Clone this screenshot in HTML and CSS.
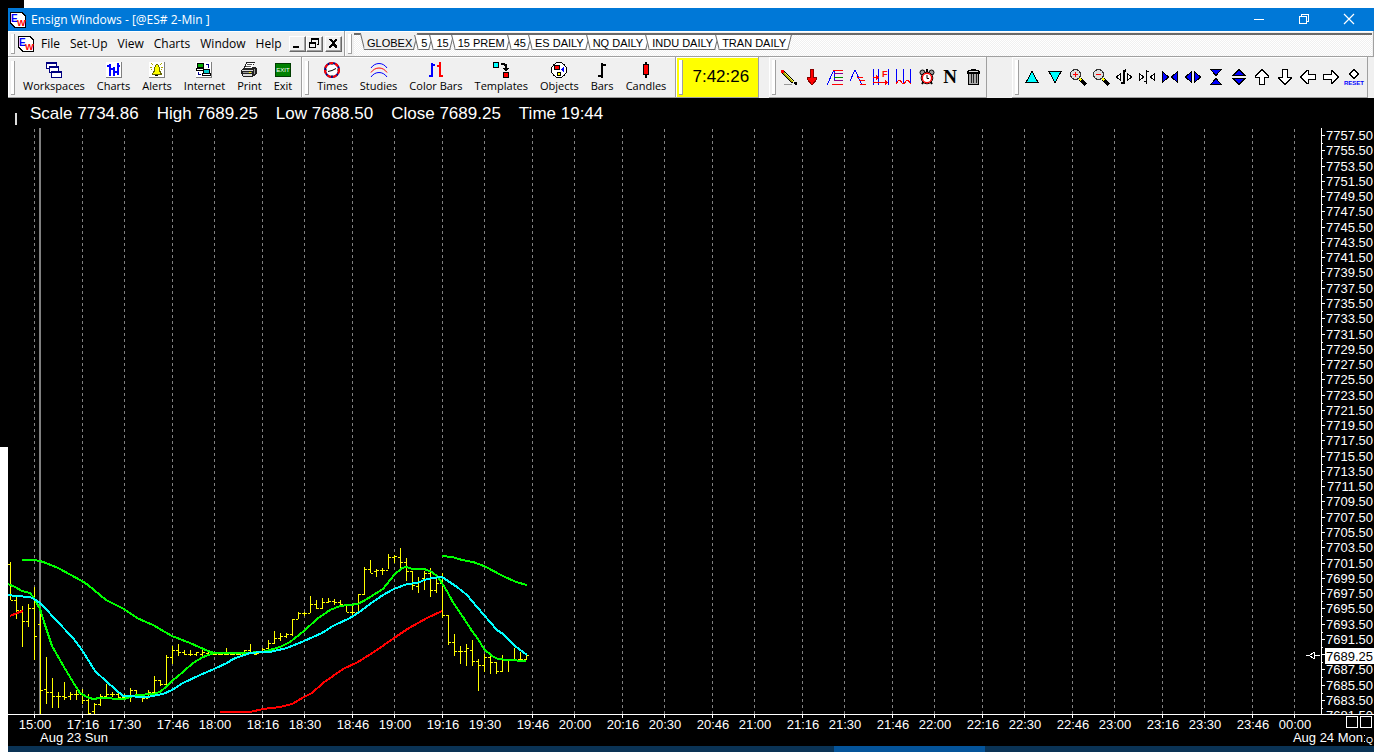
FILE: index.html
```html
<!DOCTYPE html>
<html lang="en">
<head>
    <meta charset="UTF-8" />
    <meta name="viewport" content="width=device-width, initial-scale=1" />
    <title>Ensign Windows - [@ES# 2-Min ]</title>
    <link rel="stylesheet" href="styles.css">
</head>
<body>

    <div class="window">
        <header class="titlebar">
            <svg class="icon" viewBox="0 0 16 16"><path d="M0 0h12l4 4v12H4l-4-4z" fill="#000" /><path d="M1 1h10l4 4v10H5l-4-4z" fill="#fff" /><text x="1" y="10" font-size="10" font-weight="bold" fill="#00f">E</text><text x="7" y="14" font-size="9" font-weight="bold" fill="#f00">W</text></svg>
            <h1>Ensign Windows - [@ES# 2-Min ]</h1>
            <button class="caption" aria-label="Minimize"><svg class="icon" viewBox="0 0 16 16"><path d="M3 8.500h10" stroke="#fff" /></svg></button>
            <button class="caption" aria-label="Restore"><svg class="icon" viewBox="0 0 16 16"><path d="M3.500 5.500h7v7h-7zM5.500 5V3.500h7v7H11" stroke="#fff" fill="none" /></svg></button>
            <button class="caption" aria-label="Close"><svg class="icon smooth" viewBox="0 0 16 16"><path d="M3 3l10 10M13 3L3 13" stroke="#fff" stroke-width="1.200" /></svg></button>
        </header>

        <div class="row">
            <nav class="band menu">
                <svg class="icon" viewBox="0 0 16 16"><path d="M0 0h12l4 4v12H4l-4-4z" fill="#000" /><path d="M1 1h10l4 4v10H5l-4-4z" fill="#fff" /><text x="1" y="10" font-size="10" font-weight="bold" fill="#00f">E</text><text x="7" y="14" font-size="9" font-weight="bold" fill="#f00">W</text></svg>
                <button>File</button>
                <button>Set-Up</button>
                <button>View</button>
                <button>Charts</button>
                <button>Window</button>
                <button>Help</button>
                <div class="mdi">
                    <button aria-label="Minimize chart"><svg viewBox="0 0 14 13"><path d="M3 9h6v2H3z" /></svg></button>
                    <button aria-label="Restore chart"><svg viewBox="0 0 14 13"><path d="M4 1h8v7h-2v-1h1V3H5v2H4zM2 5h7v6H2zM3 7v3h5V7z" fill-rule="evenodd" /></svg></button>
                    <button aria-label="Close chart"><svg viewBox="0 0 14 13"><path d="M3 2h2l2 2 2-2h2v1L8 6l3 3v2H9L7 8l-2 3H3V9l3-3-3-3z" /></svg></button>
                </div>
            </nav>
            <nav class="band tabs-band">
                <div class="tabs">
                    <button class="tab active">GLOBEX</button>
                    <button class="tab">5</button>
                    <button class="tab">15</button>
                    <button class="tab">15 PREM</button>
                    <button class="tab">45</button>
                    <button class="tab">ES DAILY</button>
                    <button class="tab">NQ DAILY</button>
                    <button class="tab">INDU DAILY</button>
                    <button class="tab">TRAN DAILY</button>
                </div>
            </nav>
        </div>

        <div class="row toolbars">
            <div class="band tools">
                <button><svg class="icon" viewBox="0 0 16 16"><path d="M0 0h11v7H0zM3 4h10v7H3zM5 9h11v7H5z" fill="#000080" /><path d="M1 2h9v2H1zM1 4h2v2H1zM4 6h8v3H4zM4 9h1v1H4zM6 11h9v4H6z" fill="#fff" /></svg>Workspaces</button>
                <button><svg class="icon" viewBox="0 0 16 16"><path d="M0 0h16v16H0z" fill="#808080" /><path d="M0 0h15v15H0z" fill="#fff" /><path d="M3 2h2v12H3zM1 3h2v2H1zM5 6h2v2H5zM7 5h2v9H7zM9 9h2v2H9zM11 1h2v12h-2zM13 3h1v2h-1z" fill="#00f" /></svg>Charts</button>
                <button><svg class="icon" viewBox="0 0 16 16"><path d="M0 0h16v16H0z" fill="#808080" /><path d="M0 0h15v15H0z" fill="#fff" /><path d="M7 2h2v1h1v2h1v4h1v2h1v2H3v-2h1V9h1V5h1V3h1z" fill="#660" /><path d="M7 3h2v2h1v5h1v2H4v-1h1v-1h1V5h1z" fill="#ff0" /><path d="M6 13h3v1H6z" /><path d="M2 1l2 2M1 5h2M13 1l-2 2M14 5h-2M2 8l1-1M13 8l-1-1" stroke="#aa0" /></svg>Alerts</button>
                <button><svg class="icon" viewBox="0 0 16 16"><path d="M0 0h16v16H0z" fill="#808080" /><path d="M0 0h15v15H0z" fill="#fff" /><path d="M1 1h7v5H1zM0 6h8v3H0zM7 7h7v5H7zM6 11h9v3H6z" /><path d="M2 2h5v3H2z" fill="#0a0" /><path d="M8 8h5v3H8z" fill="#0cc" /><path d="M1 7h6v1H1zM7 12h7v1H7z" fill="#fff" /><path d="M10 2.500h2.500V6M2.500 10v2.500H5" fill="none" stroke="#008" /></svg>Internet</button>
                <button><svg class="icon" viewBox="0 0 16 16"><path d="M5 0h9v1h-1v2h-1v2h3v1h1v6h-1v1h-1v1h-2v1H2v-1H1v-2H0V8h1V7h1V6h1V4h1V2h1z" fill="#222" /><path d="M6 1h7l-2 5H4z" fill="#fff" /><path d="M6 2h5v1H6zM5 4h5v1H5z" fill="#555" /><path d="M1 8h11v1H1zM2 12h9v2H2z" fill="#ddd" /><path d="M2 10h9v1H2zM13 7h1v5h-1z" fill="#999" /><path d="M8 10h2v1H8z" fill="#ff0" /></svg>Print</button>
                <button><svg class="icon" viewBox="0 0 16 16"><path d="M0 1h16v14H0z" fill="#003c00" /><path d="M1 2h14v12H1z" fill="#008000" /><text x="8" y="10" font-size="6" text-anchor="middle" fill="#fff">EXIT</text></svg>Exit</button>
            </div>
            <div class="band tools">
                <button><svg class="icon smooth" viewBox="0 0 16 16"><circle cx="8" cy="8" r="7" fill="#fff" stroke="#000080" stroke-width="2" /><circle cx="8" cy="8" r="7" fill="none" stroke="#f00" stroke-width="2" stroke-dasharray="4 2" /><path d="M4 9.500l4-1 4-2M8 2v1M8 13v1M2 8h1M13 8h1" stroke="#000" fill="none" /></svg>Times</button>
                <button><svg class="icon smooth" viewBox="0 0 16 16"><path d="M0 6C4 0 12 0 16 6M0 15C4 9 12 9 16 15" fill="none" stroke="#00f" /><path d="M0 10.500C4 4.500 12 4.500 16 10.500" fill="none" stroke="#f00" /></svg>Studies</button>
                <button><svg class="icon" viewBox="0 0 16 16"><path d="M3 1h2v14H3zM1 13h2v2H1zM5 2h2v2H5z" fill="#00f" /><path d="M11 0h2v15h-2zM9 3h2v2H9zM13 13h2v2h-2z" fill="#f00" /></svg>Color Bars</button>
                <button><svg class="icon" viewBox="0 0 16 16"><path d="M0 0h6v6H0zM10 10h6v6h-6zM8 1h4v1h2v4h2v1h-1v1h-1v1h-2V8h-1V7h-1V6h2V4h-1V3H8z" /><path d="M1 1h4v4H1z" fill="#0ff" /><path d="M11 11h4v4h-4z" fill="#f00" /></svg>Templates</button>
                <button><svg class="icon" viewBox="0 0 16 16"><circle cx="8" cy="8" r="7.500" fill="#fff" stroke="#000" /><path d="M3 3h6v5H3zM6 10h4v4H6z" /><path d="M4 4h4v3H4z" fill="#f00" /><path d="M10 8l3-4v7z" fill="#00f" /><path d="M7 11h2v2H7z" fill="#ff0" /></svg>Objects</button>
                <button><svg class="icon" viewBox="0 0 16 16"><path d="M7 1h2v15H7zM4 13h3v2H4zM9 2h3v2H9z" /></svg>Bars</button>
                <button><svg class="icon" viewBox="0 0 16 16"><path d="M7 0h2v16H7zM5 2h6v11H5z" /><path d="M6 3h4v9H6z" fill="#f00" /></svg>Candles</button>
            </div>
            <div class="band clock"><time>7:42:26</time></div>
            <div class="band draw">
                <button aria-label="Pencil"><svg class="icon" viewBox="0 0 16 16"><path d="M1.500 2.500l11 11" stroke="#000" stroke-width="4" /><path d="M3 4l9 9" stroke="#aa0" stroke-width="1.500" /><path d="M4 4l9 9" stroke="#ff6" stroke-width="1" /><path d="M0 1h3v3H0z" fill="#f00" /><path d="M13 13h3v3h-2z" /><path d="M3 15h8v1H3z" fill="#999" /></svg></button>
                <button aria-label="Arrow"><svg class="icon" viewBox="0 0 16 16"><path d="M6.500.5h3v8h3v2l-4 5h-1l-4-5v-2h3z" fill="#f00" stroke="#800" /></svg></button>
                <button aria-label="Retracement"><svg class="icon" viewBox="0 0 16 16"><path d="M0 16L7 1v11" fill="none" stroke="#00f" /><path d="M6 1.500h10M5 15.500h11" stroke="#f00" /><path d="M7 4.500h9M7 11.500h9" stroke="#808" /><path d="M7 8.500h9" stroke="#080" /></svg></button>
                <button aria-label="Extension"><svg class="icon" viewBox="0 0 16 16"><path d="M0 12L5 1l7 15" fill="none" stroke="#00f" /><path d="M7 8.500h6M9 11.500h6M10 15.500h6" stroke="#f00" /></svg></button>
                <button aria-label="Fibonacci time"><svg class="icon" viewBox="0 0 16 16"><path d="M.5 0v16M5.500 0v16M15.500 0v16" stroke="#00f" /><path d="M0 8.500h5M0 13.500h15" stroke="#f00" /><path d="M3 6l3 2.500L3 11zM12 11l3 2.500-3 2.500z" fill="#f00" /><text x="9" y="8" font-size="9" font-weight="bold" fill="#f00">F</text></svg></button>
                <button aria-label="Cycles"><svg class="icon" viewBox="0 0 16 16"><path d="M.5 0v15M7.500 0v15M14.500 0v15" stroke="#00f" /><path d="M0 15l2-3 2-1 2 3 2 1 2-3 2-1 2 3 1 1" fill="none" stroke="#f00" /></svg></button>
                <button aria-label="Alarm"><svg class="icon smooth" viewBox="0 0 16 16"><path d="M3 15l2-3M13 15l-2-3M8 0v3" stroke="#000" stroke-width="2" /><circle cx="3.500" cy="3.500" r="2.500" fill="#999" stroke="#000" /><circle cx="12.500" cy="3.500" r="2.500" fill="#999" stroke="#000" /><circle cx="8" cy="9" r="5.800" fill="#fff" stroke="#000" /><circle cx="8" cy="9" r="4.700" fill="none" stroke="#f00" stroke-width="1.500" /><path d="M8 6v3.500h2" stroke="#000" fill="none" /></svg></button>
                <button aria-label="Note"><svg class="icon" viewBox="0 0 16 16"><text class="serif" x="8" y="14" font-size="19" text-anchor="middle">N</text></svg></button>
                <button aria-label="Delete"><svg class="icon" viewBox="0 0 16 16"><path d="M6 0h5v1h3v1h1v3h-1v11H3V5H2V2h1V1h3z" /><path d="M4 2h9v1H4z" fill="#ddd" /><path d="M4 5h9v10H4z" fill="#aaa" /><path d="M6 5h1v9H6zM8 5h1v9H8zM11 5h1v9h-1z" fill="#222" /></svg></button>
            </div>
            <div class="band draw view">
                <button aria-label="Up"><svg class="icon" viewBox="0 0 16 16"><path d="M8 2l6 11.500H2z" fill="#0ff" stroke="#000" /></svg></button>
                <button aria-label="Down"><svg class="icon" viewBox="0 0 16 16"><path d="M2 2.500h12L8 14z" fill="#0ff" stroke="#000" /></svg></button>
                <button aria-label="Zoom in"><svg class="icon" viewBox="0 0 16 16"><path d="M10 10l6 6" stroke="#000" stroke-width="3" /><path d="M9.500 9.500l2 2" stroke="#ff0" stroke-width="2" /><circle cx="5.500" cy="5.500" r="5" fill="#ddd" stroke="#333" /><path d="M3 5h5v1H3zM5 3h1v5H5z" fill="#f00" /></svg></button>
                <button aria-label="Zoom out"><svg class="icon" viewBox="0 0 16 16"><path d="M10 10l6 6" stroke="#000" stroke-width="3" /><path d="M9.500 9.500l2 2" stroke="#ff0" stroke-width="2" /><circle cx="5.500" cy="5.500" r="5" fill="#ddd" stroke="#333" /><path d="M3 5h5v1H3z" fill="#f00" /></svg></button>
                <button aria-label="Wider bars"><svg class="icon" viewBox="0 0 16 16"><path d="M7 1h2v14H7zM5 13h2v2H5zM9 0h1v3H9z" /><path d="M4.500 4.500v7l-4-3.500zM11.500 4.500v7l4-3.500z" fill="#fff" stroke="#000" /></svg></button>
                <button aria-label="Narrower bars"><svg class="icon" viewBox="0 0 16 16"><path d="M7 1h1v14H7zM5 12h2v1H5zM8 2h2v1H8z" /><path d="M.5 4.500v7l4-3.500zM15.500 4.500v7l-4-3.500z" fill="#fff" stroke="#000" /></svg></button>
                <button aria-label="Compress"><svg class="icon" viewBox="0 0 16 16"><path d="M.5 2.500v11L6.500 8zM15.500 2.500v11L9.500 8z" fill="#00f" stroke="#000" /></svg></button>
                <button aria-label="Expand"><svg class="icon" viewBox="0 0 16 16"><path d="M6.500 2.500v11L.5 8zM9.500 2.500v11l6-5.500z" fill="#00f" stroke="#000" /></svg></button>
                <button aria-label="Compress scale"><svg class="icon" viewBox="0 0 16 16"><path d="M2.500.5h11L8 6.500zM2.500 15.500h11L8 9.500z" fill="#00f" stroke="#000" /></svg></button>
                <button aria-label="Expand scale"><svg class="icon" viewBox="0 0 16 16"><path d="M2 6.500h12L8 .5zM2 9.500h12l-6 6z" fill="#00f" stroke="#000" /></svg></button>
                <button aria-label="Scroll up"><svg class="icon" viewBox="0 0 16 16"><path d="M8 .5l6.500 6.500v1h-4v7.500h-5V8h-4V7z" fill="#fff" stroke="#000" /></svg></button>
                <button aria-label="Scroll down"><svg class="icon" viewBox="0 0 16 16"><path d="M8 15.500l6.500-6.500V8h-4V.5h-5V8h-4v1z" fill="#fff" stroke="#000" /></svg></button>
                <button aria-label="Scroll left"><svg class="icon" viewBox="0 0 16 16"><path d="M.5 8l6.500-6.500h1v4h7.500v5H8v4H7z" fill="#fff" stroke="#000" /></svg></button>
                <button aria-label="Scroll right"><svg class="icon" viewBox="0 0 16 16"><path d="M15.500 8l-6.500-6.500H8v4H.5v5H8v4h1z" fill="#fff" stroke="#000" /></svg></button>
                <button aria-label="Reset"><svg class="icon" viewBox="0 0 16 16"><path d="M8 0.500l4.500 4.500-4.500 4.500-4.500-4.500z" fill="#fff" stroke="#000" /><text x="8" y="16" font-size="6" font-weight="bold" text-anchor="middle" fill="#00f">RESET</text></svg></button>
            </div>
        </div>

        <main class="chart">
            <div class="quote">
                <span>Scale 7734.86</span>
                <span>High 7689.25</span>
                <span>Low 7688.50</span>
                <span>Close 7689.25</span>
                <span>Time 19:44</span>
            </div>
            <svg id="plot"></svg>
        </main>

        <footer class="taskbar"><span></span></footer>
    </div>

    <script src="chart.js"></script>
</body>
</html>
```

FILE: styles.css
```css
* {
    box-sizing: border-box;
}
body {
    margin: 0;
    font-family: "Open Sans", "Noto Sans", sans-serif;
    font-size: 12px;
    color: #000;
    background:
        linear-gradient(#000, #000) 0 0 / 24px 8px no-repeat,
        linear-gradient(#000, #000) 0 0 / 8px 447px no-repeat,
        #fff;
}
button {
    margin: 0;
    padding: 0;
    border: none;
    background: none;
    font: inherit;
    color: inherit;
    white-space: nowrap;
}
.icon {
    display: block;
    flex: none;
    width: 16px;
    height: 16px;
    overflow: visible;
    shape-rendering: crispEdges;
}
.smooth {
    shape-rendering: auto;
}
svg text {
    font-family: "Liberation Sans", Arial, sans-serif;
}
svg text.serif {
    font-family: "Liberation Serif", serif;
    font-weight: bold;
}
.window {
    display: flex;
    flex-direction: column;
    height: 100vh;
    padding: 8px 8px 0;
}

/* Title bar */
.titlebar {
    display: flex;
    align-items: center;
    flex: none;
    height: 23px;
    padding: 0 3px 0 2px;
    background: #0078d7;
    color: #fff;
}
.titlebar h1 {
    flex: 1;
    margin: 0 0 0 5px;
    font-size: 12px;
    font-weight: 400;
}
.caption {
    display: flex;
    justify-content: center;
    width: 45px;
    padding-bottom: 2px;
}

/* Menu and tabs */
.row {
    display: flex;
    flex: none;
    height: 26px;
    background: #f0f0f0;
}
.band {
    display: flex;
    align-items: center;
    border-right: 1px solid #a0a0a0;
    border-bottom: 1px solid #a0a0a0;
    box-shadow: inset 1px 1px #fff;
}
.band::before {
    content: "";
    align-self: stretch;
    flex: none;
    width: 3px;
    margin: 3px 0 2px 3px;
    border: 1px solid #a0a0a0;
    border-width: 0 1px 1px 0;
    background: #fff;
}
.menu {
    flex: none;
    width: 337px;
}
.menu .icon {
    margin: 0 7px 0 3px;
}
.menu > button {
    margin-right: 10px;
}
.menu > button:last-of-type {
    margin-right: 0;
}
.mdi {
    display: flex;
    margin: 0 2px 0 auto;
}
.mdi button {
    width: 17px;
    height: 16px;
    border: 1px solid;
    border-color: #fff #696969 #696969 #fff;
    box-shadow: inset -1px -1px #a0a0a0;
}
.mdi button:last-child {
    margin-left: 2px;
}
.mdi svg {
    display: block;
    width: 14px;
    height: 13px;
    shape-rendering: crispEdges;
}
.tabs-band {
    flex: 1;
}
.tabs {
    display: flex;
    flex: 1;
    height: 23px;
    margin: 2px 1px 0 2px;
    padding-left: 8px;
    border-top: 2px solid #696969;
    background: repeating-conic-gradient(#fff 0 25%, #f0f0f0 0 50%) 0 0 / 2px 2px;
}
.tab {
    position: relative;
    z-index: 0;
    height: 15px;
    padding: 0 4px 0 5px;
    font: 11px/14px "Liberation Sans", Arial, sans-serif;
}
.tab::before,
.tab::after {
    content: "";
    position: absolute;
    z-index: -1;
    top: 0;
    bottom: 0;
    background: #fff;
    border-bottom: 1px solid #696969;
}
.tab::before {
    left: 0;
    right: 4px;
    border-left: 1px solid #696969;
    transform: skewX(14deg);
}
.tab::after {
    left: 4px;
    right: 0;
    border-right: 1px solid #696969;
    transform: skewX(-14deg);
}
.tab.active::before,
.tab.active::after {
    top: -2px;
    background: #f0f0f0;
}

/* Toolbars */
.toolbars {
    height: 41px;
}
.tools {
    flex: none;
    gap: 12px;
    padding: 1px 9px 0 0;
    font-size: 11px;
}
.tools::before {
    margin-right: -4px;
}
.tools button {
    display: flex;
    flex-direction: column;
    align-items: center;
    line-height: 16px;
}
.clock {
    flex: none;
    width: 83px;
    background: #ff0;
    font: 17px "Liberation Sans", Arial, sans-serif;
}
.clock time {
    flex: 1;
    text-align: center;
}
.draw {
    flex: none;
    gap: 7px;
    margin-left: 10px;
    padding-right: 5px;
}
.draw::before {
    margin-right: -2px;
}
.view {
    margin: 0 6px 0 auto;
}

/* Chart */
.chart {
    display: flex;
    flex-direction: column;
    flex: 1;
    min-height: 0;
    background: #000;
    color: #fff;
}
.quote {
    display: flex;
    flex: none;
    gap: 18px;
    height: 30px;
    padding-left: 22px;
    font: 17px/32px "Liberation Sans", Arial, sans-serif;
    background: linear-gradient(#ddd, #ddd) 7px 15px / 2px 12px no-repeat;
}
#plot {
    display: block;
    flex: 1;
    min-height: 0;
    width: 100%;
    font-size: 13px;
    fill: #fff;
    shape-rendering: crispEdges;
}
.grid {
    stroke: #808080;
    stroke-dasharray: 3 3;
}
.axis {
    fill: none;
    stroke: #fff;
}
.bars {
    fill: none;
    stroke: #ff0;
}
.line {
    fill: none;
    stroke-width: 2;
}
.green { stroke: #0f0; }
.cyan { stroke: #0ff; }
.red { stroke: #f00; }

/* Taskbar */
.taskbar {
    flex: none;
    height: 6px;
    background: #0a3355;
}
.taskbar span {
    display: block;
    width: 151px;
    height: 6px;
    margin-left: 826px;
    background: #04549a;
}
```

FILE: chart.js
```js
const plot = document.getElementById("plot");
const width = plot.clientWidth;
const height = plot.clientHeight;
const axisX = width - 53;
const axisY = height - 32;

// high, low, open, close (one bar every 6px)
const bars = [
    [434,472,436,472],[468,491,472,482],[478,519,482,493],[476,499,493,480],[459,532,480,508],
    [480,586,496,562],[529,576,561,564],[550,580,564,568],[564,580,568,568],[554,572,568,569],
    [564,572,568,566],[562,572,566,566],[561,576,566,572],[566,586,572,585],[575,586,583,576],
    [566,578,576,568],[556,569,568,566],[564,569,566,566],[564,570,566,569],[566,572,569,569],
    [560,574,569,562],[562,569,562,567],[566,574,567,570],[562,569,570,564],[548,566,564,552],
    [552,558,552,556],[527,558,556,529],[518,536,529,522],[516,528,522,524],[522,527,524,526],
    [522,528,526,526],[524,528,526,524],[520,528,526,524],[524,528,525,526],[524,527,526,526],
    [524,527,526,526],[520,527,526,526],[524,527,526,526],[524,527,526,526],[522,527,526,522],
    [516,526,522,525],[524,527,526,525],[520,525,524,521],[512,522,520,515],[503,516,515,510],
    [505,513,510,508],[505,510,508,506],[491,508,506,491],[484,491,491,485],[484,488,485,485],
    [468,485,485,476],[472,481,476,480],[470,481,480,474],[470,475,474,473],[471,477,473,474],
    [472,477,474,476],[476,484,476,484],[478,487,484,484],[466,485,484,466],[439,467,466,441],
    [432,445,441,445],[441,449,443,442],[440,447,442,442],[426,441,442,429],[427,435,429,428],
    [420,441,429,434],[430,453,434,443],[443,462,443,457],[449,465,458,454],[443,462,450,445],
    [440,469,445,462],[451,465,462,455],[445,490,455,487],[487,517,487,514],[506,528,514,523],
    [518,536,523,523],[516,538,523,520],[512,538,522,533],[531,563,533,537],[526,544,537,529],
    [527,546,529,534],[534,546,534,543],[527,544,543,531],[531,544,531,531],[520,533,531,531],
    [524,533,531,531],[526,532,531,527]
];

const lines = {
    green: [
        "14,432 26,432 32,433 38,435 50,440 74,453 80,457 98,472 116,481 129,490 145,497 164,508 182,515 200,523 206,525 236,525",
        "0,456 7,459 14,463 22,465 26,470 32,481 37,497 44,518 56,539 65,554 72,565 79,569 85,571 92,570 116,571 129,567 145,566 152,564 159,558 164,553 175,544 185,535 195,529 206,525 236,525 254,524 262,522 272,519 282,514 296,503 309,491 322,482 332,478 350,476 359,471 375,461 386,447 394,440 398,439 405,441 416,441 424,444 430,449 434,455 440,465 446,476 455,489 464,503 470,511 476,521 484,528 490,531 500,532 518,533",
        "434,428 444,429 454,432 465,434 476,438 495,448 508,454 519,457"
    ],
    cyan: [
        "0,467 7,468 22,469 26,471 32,475 38,481 47,491 65,510 74,522 87,543 99,554 107,561 115,568 139,569 155,566 164,562 175,555 192,547 206,541 219,535 225,531 242,525 254,524 262,524 279,520 296,513 314,505 325,498 342,490 350,485 362,476 375,467 386,461 399,456 409,455 419,451 425,450 434,449 440,453 449,459 459,467 469,479 476,487 489,502 495,506 507,518 519,527"
    ],
    red: [
        "2,488 9,485 15,483",
        "212,584 242,584 255,581 272,579 284,576 296,569 304,565 315,555 335,541 350,534 369,522 386,510 401,500 419,490 434,483"
    ]
};

let out = "";

// Time axis: labels at :00, :16, :30 and :46, 3px per minute
const times = [[26, "15:00"]];
for (let hour = 17; hour <= 24; hour++) {
    for (const minute of [0, 16, 30, 46]) {
        const x = 206 + (hour - 18) * 180 + minute * 3;
        if (x < 60 || x > axisX - 20) continue;
        times.push([x, String(hour % 24).padStart(2, "0") + ":" + String(minute).padStart(2, "0")]);
    }
}
for (const [x, label] of times) {
    out += `<path class="grid" d="M${x + 0.5} 1V${axisY}" />`;
    out += `<path class="axis" d="M${x + 0.5} ${axisY}v4" />`;
    out += `<text x="${x + 1}" y="${axisY + 15}" text-anchor="middle">${label}</text>`;
}
out += `<path d="M31 0h2v${axisY}h-2z" fill="#808080" />`;

// Price bars
let d = "";
bars.forEach(([high, low, open, close], i) => {
    const x = 2 + i * 6;
    d += `M${x + 0.5} ${high}V${low}M${x - 2} ${open + 0.5}h2M${x + 1} ${close + 0.5}h2`;
});
out += `<path class="bars" d="${d}" />`;

for (const color in lines) {
    for (const points of lines[color]) {
        out += `<polyline class="line ${color}" points="${points}" />`;
    }
}

// Price axis
out += `<svg width="${width}" height="${axisY}">`;
for (let price = 7757.5, i = 0; price > 7680; price -= 2, i++) {
    const y = Math.round(7 + i * 15.27);
    out += `<path class="axis" d="M${axisX} ${y + 0.5}h4M${axisX} ${y + 8.5}h2" />`;
    out += `<text x="${width - 1}" y="${y + 5}" text-anchor="end">${price.toFixed(2)}</text>`;
}
out += `</svg>`;
out += `<path class="axis" d="M${axisX + 0.5} 0V${axisY}M0 ${axisY + 0.5}H${width}" />`;

// Last price marker
out += `<rect x="${width - 49}" y="520" width="49" height="16" />`;
out += `<text x="${width - 1}" y="533" text-anchor="end" fill="#000">7689.25</text>`;
out += `<path class="axis" d="M${axisX - 15} 527.5h3l5-3v6l-5-3M${axisX - 7} 527.5h6" />`;

// Dates and corner boxes
out += `<text x="32" y="${axisY + 28}">Aug 23 Sun</text>`;
out += `<text x="${width - 11}" y="${axisY + 28}" text-anchor="end">Aug 24 Mon</text>`;
out += `<path class="axis" d="M${width - 27.5} ${axisY + 2.5}h11v11h-11zM${width - 13.5} ${axisY + 2.5}h11v11h-11z" />`;
out += `<text x="${width - 8}" y="${axisY + 29}" font-size="9">Q</text>`;
out += `<path d="M${width - 10} ${axisY + 21}h1v1h-1zM${width - 10} ${axisY + 27}h1v1h-1z" />`;

plot.innerHTML = out;
```
